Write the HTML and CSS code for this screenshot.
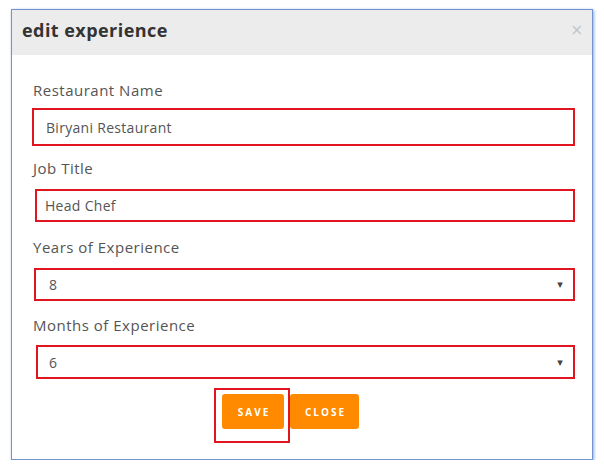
FILE: index.html
```html
<!DOCTYPE html>
<html>
<head>
<meta charset="utf-8">
<link rel="stylesheet" href="styles.css">
</head>
<body>
<div class="modal">
  <div class="modal-header">
    <h4 class="modal-title">edit experience</h4>
    <span class="close-x">×</span>
  </div>
  <div class="modal-body">
    <label class="label label-first">Restaurant Name</label>
    <div class="field field-tall">Biryani Restaurant</div>
    <label class="label">Job Title</label>
    <div class="field field-shift">Head Chef</div>
    <label class="label label-third">Years of Experience</label>
    <div class="field field-select field-shift2"><span>8</span><span class="arrow">▾</span></div>
    <label class="label label-fourth">Months of Experience</label>
    <div class="field field-select field-shift3"><span>6</span><span class="arrow">▾</span></div>
    <div class="actions">
      <span class="mark"><button class="btn">SAVE</button></span>
      <button class="btn btn-close">CLOSE</button>
    </div>
  </div>
</div>
</body>
</html>
```
FILE: styles.css
```css
* { box-sizing: border-box; }
body {
  margin: 0;
  background: #fff;
  font-family: "Open Sans", "Liberation Sans", sans-serif;
}
.modal {
  margin: 9px 0 0 11px;
  width: 582px;
  height: 451px;
  border: 1px solid #6f93cf;
  box-shadow: 1px 1px 3px #8fabd9;
  background: #fff;
}
.modal-header {
  height: 45px;
  background: #ececec;
  display: flex;
  align-items: center;
  justify-content: space-between;
  padding: 0 9px 6px 10px;
}
.modal-title {
  margin: 0;
  font-size: 18px;
  font-weight: 700;
  color: #333;
  letter-spacing: 0.45px;
}
.close-x {
  color: #c4c4c4;
  font-size: 15px;
  font-family: "DejaVu Sans", sans-serif;
}
.modal-body {
  padding: 0 17px 0 20px;
}
.label {
  display: block;
  font-size: 15px;
  line-height: 20px;
  color: #555;
  margin: 12px 0 11px 1px;
  letter-spacing: 0.5px;
}
.label-first { margin-top: 25px; margin-bottom: 8px; }
.label-third { margin-top: 15px; }
.label-fourth { margin-top: 14px; margin-bottom: 10px; }
.field {
  height: 33px;
  border: 2px solid #e0151f;
  display: flex;
  align-items: center;
  padding: 0 10px 0 11px;
  font-size: 14px;
  color: #555;
  letter-spacing: 0.3px;
}
.field-tall { height: 38px; padding-left: 12px; }
.field-shift { margin-left: 3px; padding-left: 8px; }
.field-shift2 { margin-left: 2px; padding-left: 13px; }
.field-shift3 { margin-left: 4px; padding-left: 11px; height: 34px; }
.field-select { justify-content: space-between; }
.arrow {
  font-size: 11px;
  color: #444;
  font-family: "DejaVu Sans", sans-serif;
}
.actions {
  display: flex;
  align-items: flex-start;
  padding-left: 182px;
  margin-top: 9px;
}
.mark {
  display: block;
  border: 2px solid #e0151f;
  padding: 4px 4px 12px 6px;
}
.btn {
  display: block;
  height: 35px;
  width: 62px;
  border: 0;
  border-radius: 3px;
  background: #ff8a00;
  color: #fff;
  font-family: "Open Sans", sans-serif;
  font-weight: 700;
  font-size: 10px;
  letter-spacing: 2px;
  padding: 0 0 0 2px;
}
.btn-close {
  width: 69px;
  margin-top: 6px;
}
```
